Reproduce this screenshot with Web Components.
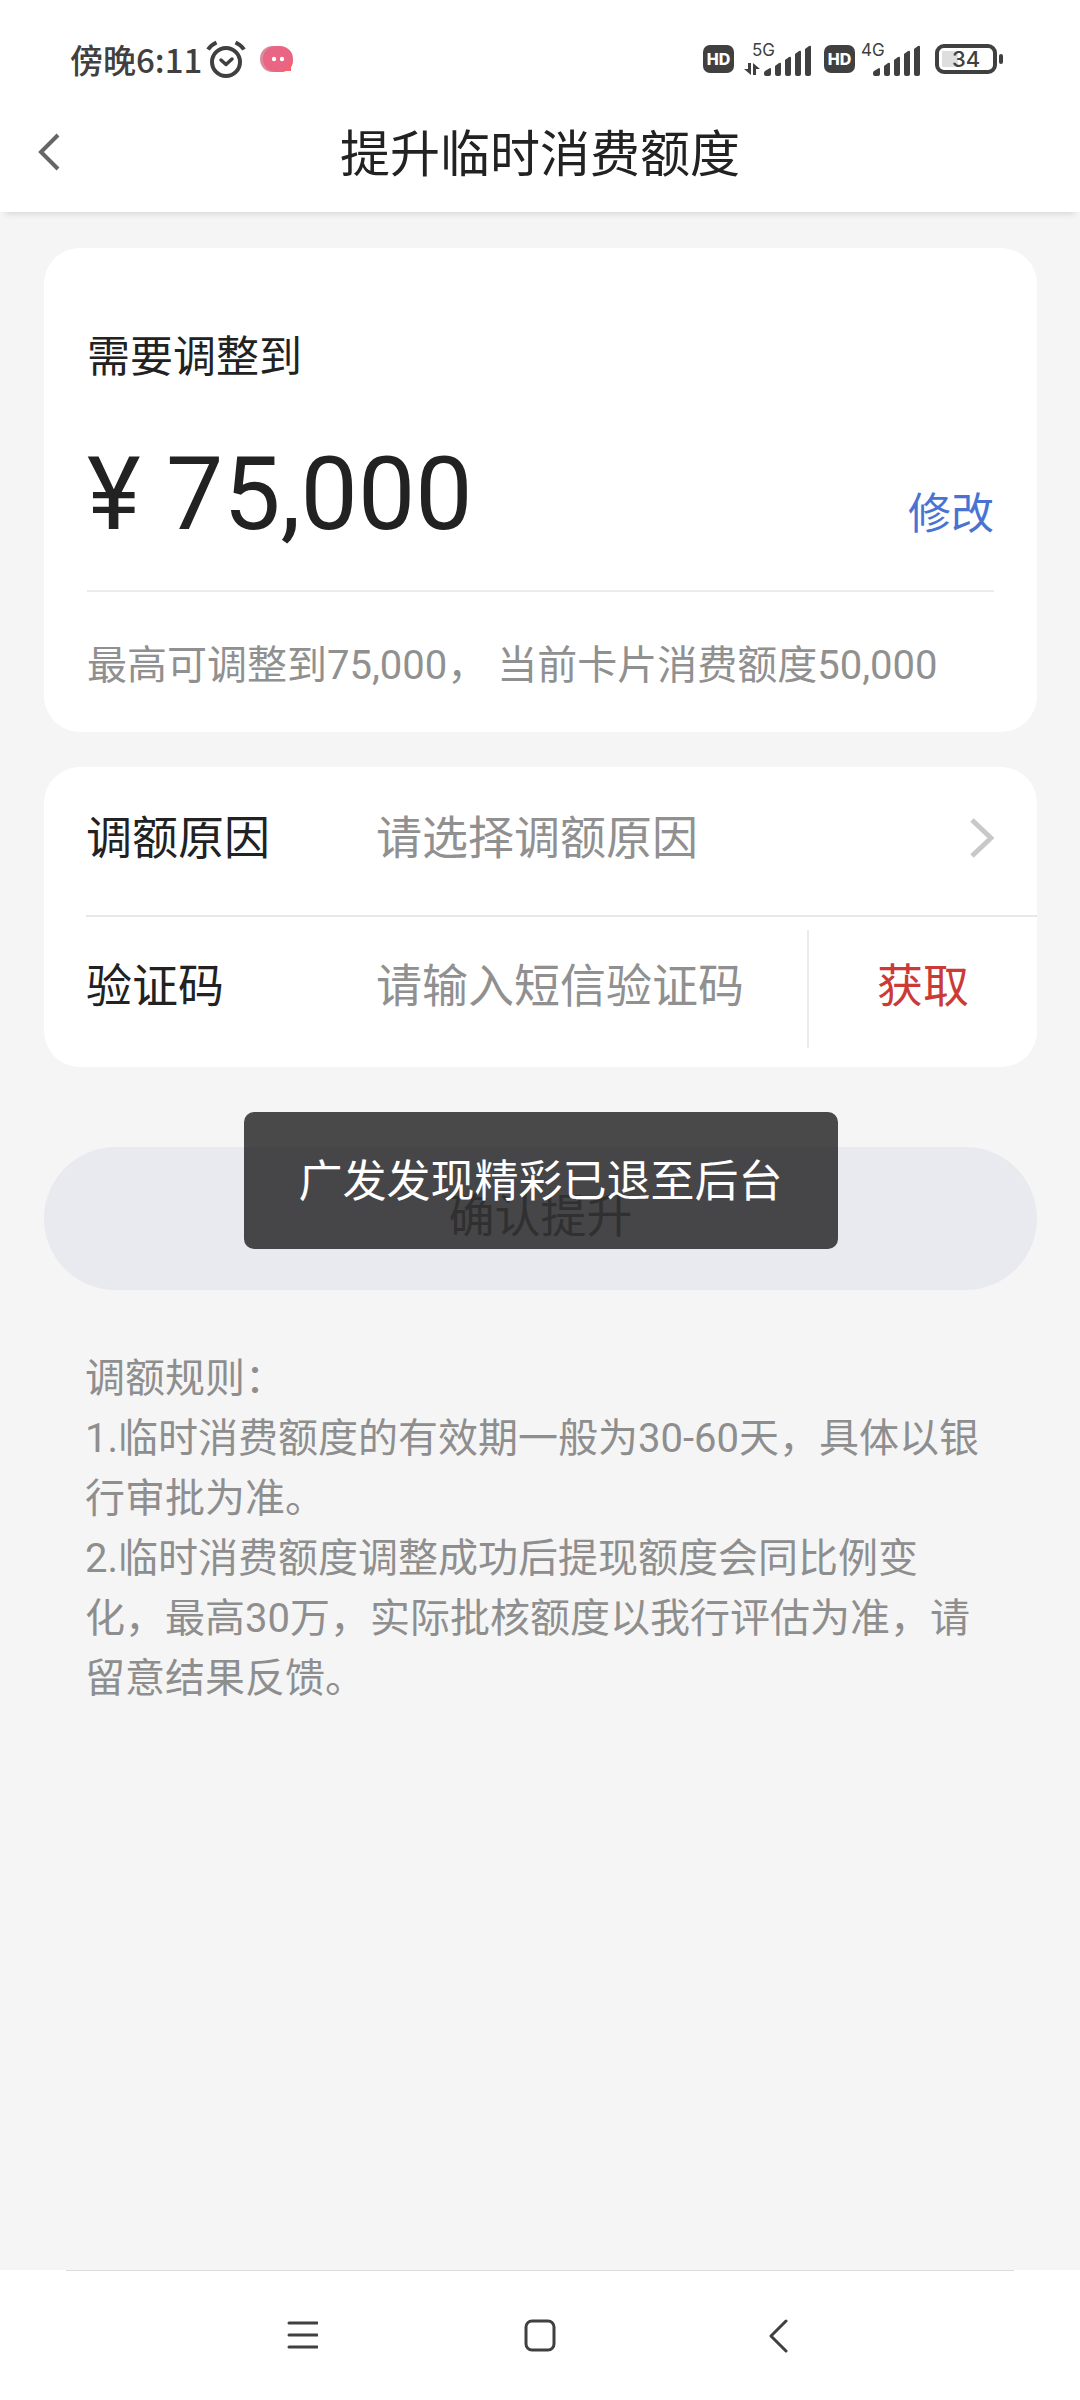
<!DOCTYPE html>
<html lang="zh-CN">
<head>
<meta charset="utf-8">
<meta name="viewport" content="width=device-width, initial-scale=1">
<title>提升临时消费额度</title>
<style>
  html, body { margin: 0; }
  body {
    font-family: Roboto, "Noto Sans CJK SC", sans-serif;
    color: #222;
    background: #f5f5f5;
  }
</style>
</head>
<body>
<limit-app></limit-app>

<script>
const define = (name, html) => {
  const template = document.createElement('template');
  template.innerHTML = `<style>
    *, ::before, ::after { box-sizing: border-box; }
    button, input, select { font: inherit; color: inherit; background: none; border: 0; padding: 0; margin: 0; border-radius: 0; outline: 0; }
    svg { display: block; flex: none; }
  </style>` + html;
  customElements.define(name, class extends HTMLElement {
    constructor() {
      super();
      this.attachShadow({ mode: 'open' }).append(template.content.cloneNode(true));
    }
  });
};

define('hd-badge', `
  <style>
    :host { display: grid; place-items: center; width: 31px; height: 28px; border-radius: 7px; background: #404040; color: #fff; font: 800 16px/28px Inter, sans-serif; }
  </style>
  <span>HD</span>`);

define('signal-bars', `
  <style>
    :host { display: flex; align-items: flex-start; height: 34px; font: 400 17px/16px Inter, sans-serif; }
    .net { position: relative; width: 60px; height: 34px; }
    .net svg { position: absolute; right: 0; bottom: 0; }
    .net span { display: block; }
  </style>
  <div class="net">
    <span><slot></slot></span>
    <svg width="48" height="31" viewBox="0 0 48 31" fill="#404040">
      <path d="M1 26 6 23Q7 23 7 24V29Q7 31 5 31H2Q0 31 0 29V28Q0 27 1 26Z"/>
      <path d="M11 21 15 18Q17 17 17 19V29Q17 31 15 31H13Q11 31 11 29Z"/>
      <path d="M21 15 25 12Q27 11 27 13V29Q27 31 25 31H23Q21 31 21 29Z"/>
      <path d="M31 9 35 6Q37 5 37 7V29Q37 31 35 31H33Q31 31 31 29Z"/>
      <path d="M41 4 45 1Q47 0 47 2V29Q47 31 45 31H43Q41 31 41 29Z"/>
    </svg>
  </div>`);

define('battery-level', `
  <style>
    :host { display: flex; align-items: center; gap: 2px; }
    .shell { width: 62px; height: 30px; border: 4px solid #404040; border-radius: 9px; padding: 3px; }
    .fill { display: grid; place-items: center; height: 16px; background: linear-gradient(90deg, #dedede 34%, transparent 34%); font: 500 22px/16px Inter, sans-serif; }
    .nub { width: 4px; height: 10px; border-radius: 2px; background: #404040; }
  </style>
  <div class="shell"><div class="fill"><span><slot></slot></span></div></div>
  <div class="nub"></div>`);

define('status-bar', `
  <style>
    :host { display: flex; align-items: center; justify-content: space-between; height: 98px; padding: 20px 77px 0 70px; color: #404040; background: #fff; }
    .side { display: flex; align-items: center; }
    time { font: 500 33px/48px "Noto Sans CJK SC", sans-serif; }
    .alarm { margin: 0 14px 0 4px; }
    .gap-a { margin-left: 10px; }
    .gap-b { margin-left: 12px; }
    .gap-c { margin-left: 6px; }
    .gap-d { margin-left: 14px; }
    .first { display: flex; align-items: flex-end; }
    .arrows { margin-right: -14px; }
  </style>
  <div class="side">
    <time>傍晚6:11</time>
    <svg class="alarm" width="40" height="38" viewBox="0 0 40 38" fill="none" stroke="#404040" stroke-width="4">
      <circle cx="20" cy="22" r="14"/>
      <path d="M2 9.500Q5 5 10.500 2.500M38 9.500Q35 5 29.500 2.500"/>
      <path d="M15 20 20 24.500 26 19" stroke-width="3.500" stroke-linecap="round" stroke-linejoin="round"/>
    </svg>
    <svg width="34" height="28" viewBox="0 0 34 28">
      <path d="M12 1H20V27H12A12 13 0 0 1 12 1Z" fill="#d98c9c"/>
      <path d="M16 1H20A13 13 0 0 1 33 14Q33 19 31 22V26H26Q23 27 20 27H16A13 13 0 0 1 16 1Z" fill="#e96583"/>
      <path d="M33 14Q33 19 31 22V26H26Q23 27 20 27 30 22 33 14Z" fill="#f5626c"/>
      <circle cx="14" cy="14" r="2.200" fill="#fff"/><circle cx="22" cy="14" r="2.200" fill="#fff"/>
    </svg>
  </div>
  <div class="side">
    <hd-badge></hd-badge>
    <div class="first gap-a">
      <svg class="arrows" width="16" height="13" viewBox="0 0 16 13" fill="#404040"><path d="M4 0H7V12L0 6H4ZM9 0 16 6H12V12H9Z"/></svg>
      <signal-bars class="gap-c">5G</signal-bars>
    </div>
    <hd-badge class="gap-b"></hd-badge>
    <signal-bars class="gap-c">4G</signal-bars>
    <battery-level class="gap-d">34</battery-level>
  </div>`);

define('title-bar', `
  <style>
    :host { display: grid; grid-template-columns: 100px 1fr 100px; align-items: center; height: 114px; background: #fff; box-shadow: 0 7px 6px -5px rgba(0,0,0,.12); }
    button { height: 100px; padding: 0 0 6px 38px; }
    h1 { margin: 0; font-size: 50px; line-height: 72px; font-weight: 400; text-align: center; }
  </style>
  <button aria-label="返回"><svg width="24" height="40" viewBox="0 0 24 40" fill="none" stroke="#666" stroke-width="4"><path d="M20 3 3 20 20 37"/></svg></button>
  <h1><slot></slot></h1>`);

define('amount-card', `
  <style>
    :host { display: block; padding: 77px 43px 36px 43px; border-radius: 36px; background: #fff; }
    .label { font-size: 43px; line-height: 64px; }
    .row { display: flex; justify-content: space-between; align-items: flex-end; padding: 45px 0 36px; border-bottom: 2px solid #ebebeb; }
    .amount { font-size: 102px; line-height: 120px; }
    a { color: #4873d3; font-size: 43px; line-height: 64px; text-decoration: none; margin-bottom: 8px; }
    .note { margin-top: 44px; font-size: 40px; line-height: 60px; color: #909090; }
  </style>
  <div class="label">需要调整到</div>
  <div class="row"><div class="amount">¥ 75,000</div><a href="#amount">修改</a></div>
  <div class="note">最高可调整到75,000， 当前卡片消费额度50,000</div>`);

define('limit-form', `
  <style>
    :host { display: block; padding-left: 42px; border-radius: 36px; background: #fff; font-size: 46px; line-height: 68px; }
    .row { display: flex; align-items: center; }
    .reason { height: 148px; padding: 0 43px 6px 0; }
    .code { height: 152px; padding-bottom: 12px; border-top: 2px solid #e8e8e8; }
    label { width: 290px; flex: none; }
    select, input { flex: 1; min-width: 0; height: 68px; color: #909090; appearance: none; }
    select { opacity: 1; }
    input::placeholder { color: #909090; opacity: 1; }
    button { width: 230px; height: 118px; margin-top: 6px; padding-bottom: 6px; border-left: 2px solid #ebebeb; color: #cb3a36; }
  </style>
  <div class="row reason">
    <label for="reason">调额原因</label>
    <select id="reason"><option>请选择调额原因</option></select>
    <svg width="26" height="42" viewBox="0 0 26 42" fill="none" stroke="#c8c8c8" stroke-width="5"><path d="M4 3 23 21 4 39"/></svg>
  </div>
  <div class="row code">
    <label for="code">验证码</label>
    <input id="code" type="text" inputmode="numeric" placeholder="请输入短信验证码">
    <button type="button">获取</button>
  </div>`);

define('submit-area', `
  <style>
    :host { display: block; position: relative; }
    button { display: block; width: 100%; height: 143px; padding-bottom: 6px; border-radius: 72px; background: #e9eaf0; color: #a2a2a6; font-size: 46px; line-height: 68px; }
  </style>
  <button type="button"><slot></slot></button>
  <slot name="toast"></slot>`);

define('toast-message', `
  <style>
    :host { position: absolute; top: -35px; left: 50%; transform: translateX(-50%); padding: 38px 55px 35px; border-radius: 10px; background: rgba(0,0,0,.7); color: #fff; font-size: 44px; line-height: 64px; white-space: nowrap; }
  </style>
  <span role="status"><slot></slot></span>`);

define('rule-list', `
  <style>
    :host { display: block; padding: 0 41px; font-size: 40px; line-height: 60px; color: #8e8e8e; }
    p { margin: 0; }
  </style>
  <p>调额规则：</p>
  <p>1.临时消费额度的有效期一般为30-60天，具体以银行审批为准。</p>
  <p>2.临时消费额度调整成功后提现额度会同比例变化，最高30万，实际批核额度以我行评估为准，请留意结果反馈。</p>`);

define('system-nav', `
  <style>
    :host { display: block; background: #fff; }
    hr { margin: 0 66px; border: 0; height: 1px; background: #ddd; }
    nav { display: flex; justify-content: center; height: 129px; }
    button { display: grid; place-items: center; width: 238px; }
    svg { fill: none; stroke: #404040; stroke-width: 3; stroke-linecap: round; stroke-linejoin: round; }
  </style>
  <hr>
  <nav>
    <button aria-label="最近任务"><svg width="32" height="34" viewBox="0 0 32 34"><path d="M3 4H31M3 16H31M3 28H31"/></svg></button>
    <button aria-label="主屏幕"><svg width="34" height="34" viewBox="0 0 34 34"><rect x="3" y="2" width="28" height="29" rx="6"/></svg></button>
    <button aria-label="后退"><svg width="20" height="34" viewBox="0 0 20 34"><path d="M18 2 3 17 18 32"/></svg></button>
  </nav>`);

define('limit-app', `
  <style>
    :host { display: flex; flex-direction: column; min-height: 100vh; }
    main { flex: 1; padding: 36px 43px 40px 44px; }
    limit-form { margin-top: 35px; }
    submit-area { margin-top: 80px; }
    rule-list { margin-top: 59px; }
  </style>
  <status-bar></status-bar>
  <title-bar>提升临时消费额度</title-bar>
  <main>
    <amount-card></amount-card>
    <limit-form></limit-form>
    <submit-area>确认提升<toast-message slot="toast">广发发现精彩已退至后台</toast-message></submit-area>
    <rule-list></rule-list>
  </main>
  <system-nav></system-nav>`);
</script>
</body>
</html>
